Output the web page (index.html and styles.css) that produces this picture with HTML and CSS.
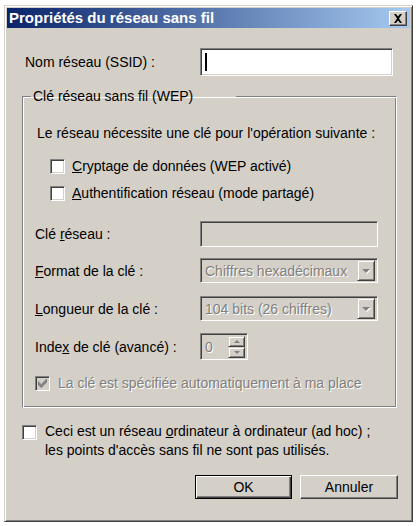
FILE: index.html
```html
<!DOCTYPE html>
<html lang="fr">
<head>
<meta charset="utf-8">
<title>Propriétés du réseau sans fil</title>
<link rel="stylesheet" href="styles.css">
</head>
<body>
<div class="window">
  <div class="titlebar">
    <span class="title">Propriétés du réseau sans fil</span>
    <span class="close"><svg width="10" height="9" viewBox="0 0 10 9"><path d="M1 0h2l2 2.5L7 0h2L6 4.5 9 9H7L5 6.5 3 9H1l3-4.5z" fill="#000"/></svg></span>
  </div>
  <div class="body">
    <div class="row ssid">
      <span class="lbl">Nom réseau (SSID) :</span>
      <span class="edit white"><span class="caret"></span></span>
    </div>
    <fieldset class="group">
      <legend>Clé réseau sans fil (WEP)</legend>
      <div class="intro">Le réseau nécessite une clé pour l'opération suivante :</div>
      <div class="check sub cb1"><span class="box"></span><span><u>C</u>ryptage de données (WEP activé)</span></div>
      <div class="check sub cb2"><span class="box"></span><span><u>A</u>uthentification réseau (mode partagé)</span></div>
      <div class="row field key">
        <span class="lbl">Clé <u>r</u>éseau :</span>
        <span class="edit gray"></span>
      </div>
      <div class="row field fmt">
        <span class="lbl"><u>F</u>ormat de la clé :</span>
        <span class="edit gray combo"><span class="val dis">Chiffres hexadécimaux</span><span class="drop"><span class="arrow"></span></span></span>
      </div>
      <div class="row field len">
        <span class="lbl"><u>L</u>ongueur de la clé :</span>
        <span class="edit gray combo"><span class="val dis">104 bits (26 chiffres)</span><span class="drop"><span class="arrow"></span></span></span>
      </div>
      <div class="row field idx">
        <span class="lbl">Inde<u>x</u> de clé (avancé) :</span>
        <span class="edit gray spin"><span class="val dis">0</span><span class="spinbtns"><span class="sb"><span class="up"></span></span><span class="sb"><span class="down"></span></span></span></span>
      </div>
      <div class="check auto"><span class="box checked"><svg width="11" height="9" viewBox="0 0 7 7"><path d="M0 2h1v1h1v1h1V3h1V2h1V1h1V0h1v3H6v1H5v1H4v1H3v1H2V6H1V5H0z" fill="#808080"/></svg></span><span class="dis">La clé est spécifiée automatiquement à ma place</span></div>
    </fieldset>
    <div class="check adhoc"><span class="box"></span><span>Ceci est un réseau <u>o</u>rdinateur à ordinateur (ad hoc) ;<br>les points d'accès sans fil ne sont pas utilisés.</span></div>
    <div class="buttons">
      <span class="btn default"><span class="btn-in">OK</span></span>
      <span class="btn"><span class="btn-in">Annuler</span></span>
    </div>
  </div>
</div>
</body>
</html>
```
FILE: styles.css
```css
html, body { margin: 0; padding: 0; background: #fff; }
body { font-family: "Liberation Sans", Arial, sans-serif; font-size: 14px; line-height: 16px; color: #000; }
.window {
  margin: 5px 0 0 4px;
  width: 409px; height: 517px;
  box-sizing: border-box;
  background: #d4d0c8;
  border: 1px solid; border-color: #d4d0c8 #404040 #404040 #d4d0c8;
  box-shadow: inset 1px 1px 0 #fff, inset -1px -1px 0 #808080;
  padding: 2px;
  display: flex; flex-direction: column;
}
.titlebar {
  height: 20px; flex: none; display: flex; align-items: center; justify-content: space-between;
  background: linear-gradient(to right, #0a246a, #a6caf0);
  padding: 0 3px 0 2px;
}
.title { color: #fff; font-weight: bold; font-size: 15px; }
.close {
  width: 18px; height: 15px; box-sizing: border-box; background: #d4d0c8;
  border: 1px solid; border-color: #fff #404040 #404040 #fff;
  box-shadow: inset -1px -1px 0 #808080;
  display: flex; align-items: center; justify-content: center;
}
.body { padding: 0 13px 0 15px; flex: 1; display: flex; flex-direction: column; }
.row { display: flex; align-items: center; }
.lbl { flex: none; }
.ssid { margin-top: 20px; padding: 0 4px 0 3px; }
.ssid .lbl { width: 175px; }
.edit {
  box-sizing: border-box; height: 26px; flex: 1;
  border: 1px solid; border-color: #808080 #fff #fff #808080;
  box-shadow: inset 1px 1px 0 #404040, inset -1px -1px 0 #d4d0c8;
  display: flex; align-items: center;
}
.ssid .edit { height: 28px; }
.white { background: #fff; }
.gray { background: #d4d0c8; }
.caret { width: 2px; height: 18px; background: #000; margin-left: 4px; }
.group {
  margin: 12px 0 0 0; padding: 0 18px 15px 12px; min-width: 0;
  border: 1px solid #808080; border-right-color: #fff; border-bottom-color: #fff;
  box-shadow: inset 1px 1px 0 #fff, inset -1px -1px 0 #808080;
}
.group legend { padding: 0 43px 0 2px; margin-left: -4px; line-height: 16px; }
.intro { padding-left: 2px; margin-top: 21px; height: 16px; }
.check { display: flex; align-items: center; }
.box {
  box-sizing: border-box; width: 15px; height: 15px; flex: none; background: #fff;
  border: 1px solid; border-color: #808080 #fff #fff #808080;
  box-shadow: inset 1px 1px 0 #404040, inset -1px -1px 0 #d4d0c8;
  margin-right: 7px;
  display: flex; align-items: center; justify-content: center;
}
.box.checked { background: #d4d0c8; }
.sub { margin-left: 15px; height: 18px; }
.cb1 { margin-top: 16px; }
.cb2 { margin-top: 9px; }
.field .lbl { width: 165px; }
.key { margin-top: 19px; }
.fmt { margin-top: 11px; }
.len { margin-top: 13px; }
.idx { margin-top: 12px; }
.combo, .spin { height: 25px; }
.spin { height: 27px; flex: none; width: 48px; }
.combo .val, .spin .val { flex: 1; padding-left: 4px; white-space: nowrap; overflow: hidden; }
.dis { color: #808080; text-shadow: 1px 1px 0 #fff; }
.drop {
  width: 18px; height: 21px; flex: none; box-sizing: border-box; margin-right: 2px; background: #d4d0c8;
  border: 1px solid; border-color: #d4d0c8 #404040 #404040 #d4d0c8;
  box-shadow: inset 1px 1px 0 #fff, inset -1px -1px 0 #808080;
  display: flex; align-items: center; justify-content: center;
}
.arrow { width: 0; height: 0; border-left: 4px solid transparent; border-right: 4px solid transparent; border-top: 4px solid #808080; filter: drop-shadow(1px 1px 0 #fff); }
.spinbtns { display: flex; flex-direction: column; margin-right: 2px; }
.sb {
  width: 17px; height: 11px; box-sizing: border-box; background: #d4d0c8;
  border: 1px solid; border-color: #d4d0c8 #404040 #404040 #d4d0c8;
  box-shadow: inset 1px 1px 0 #fff, inset -1px -1px 0 #808080;
  display: flex; align-items: center; justify-content: center;
}
.up { width: 0; height: 0; border-left: 3px solid transparent; border-right: 3px solid transparent; border-bottom: 3px solid #808080; }
.down { width: 0; height: 0; border-left: 3px solid transparent; border-right: 3px solid transparent; border-top: 3px solid #808080; }
.auto { margin-top: 14px; height: 18px; }
.auto .box { margin-right: 8px; }
.adhoc { margin-top: 14px; line-height: 19px; align-items: flex-start; }
.adhoc .box { margin-top: 3px; margin-right: 8px; }
.buttons { display: flex; justify-content: flex-end; gap: 8px; margin-top: 15px; margin-right: -1px; }
.btn {
  box-sizing: border-box; width: 98px; height: 24px; background: #d4d0c8;
  border: 1px solid; border-color: #fff #404040 #404040 #fff;
  box-shadow: inset -1px -1px 0 #808080;
  display: flex; align-items: center; justify-content: center;
}
.btn.default { width: 97px; border: 1px solid #000; box-shadow: inset 1px 1px 0 #fff, inset -1px -1px 0 #404040, inset -2px -2px 0 #808080; }
```
